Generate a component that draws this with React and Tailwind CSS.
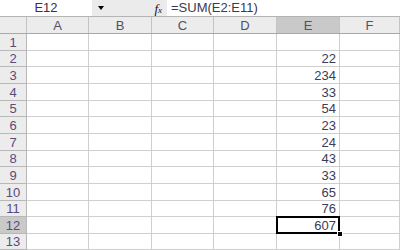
const COLS = [
  { name: "A", w: "w-[62px]" },
  { name: "B", w: "w-[63px]" },
  { name: "C", w: "w-[62px]" },
  { name: "D", w: "w-[63px]" },
  { name: "E", w: "w-[63px]" },
  { name: "F", w: "flex-1" },
]

// row heights alternate so the grid lands on the same pixels as the shot
const ROWS = [
  { n: 1, h: "h-[17px]", v: "" },
  { n: 2, h: "h-[16px]", v: "22" },
  { n: 3, h: "h-[17px]", v: "234" },
  { n: 4, h: "h-[17px]", v: "33" },
  { n: 5, h: "h-[16px]", v: "54" },
  { n: 6, h: "h-[17px]", v: "23" },
  { n: 7, h: "h-[17px]", v: "24" },
  { n: 8, h: "h-[16px]", v: "43" },
  { n: 9, h: "h-[17px]", v: "33" },
  { n: 10, h: "h-[17px]", v: "65" },
  { n: 11, h: "h-[16px]", v: "76" },
  { n: 12, h: "h-[17px]", v: "607" },
  { n: 13, h: "h-[16px]", v: "" },
]

export default function App() {
  return (
    <div className="w-[400px] h-[250px] flex flex-col overflow-hidden bg-white text-[13px] leading-none font-['Liberation_Sans',Arial,sans-serif]">
      {/* formula bar */}
      <div className="flex flex-none h-[17px] border-b border-[#b4b4b4]">
        <div className="w-[92px] flex items-center justify-center text-[#4a2850] pb-px">
          E12
        </div>
        <div className="w-[75px] bg-[#ebebeb] flex items-center">
          <span className="ml-[6px] w-0 h-0 border-l-[3px] border-r-[3px] border-t-[4px] border-l-transparent border-r-transparent border-t-black" />
          <span className="ml-auto mr-[5px] italic font-['Liberation_Serif',serif] text-[13px] text-[#111]">
            f<span className="text-[9px]">x</span>
          </span>
        </div>
        <div className="flex-1 flex items-center pl-[4px] text-[#3a3a50] pb-px">
          =SUM(E2:E11)
        </div>
      </div>

      {/* column headers */}
      <div className="flex flex-none h-[17px] bg-[#ececec] border-b border-[#a8a8a8] text-[#50506a]">
        <div className="w-[27px] border-r border-[#c4c4c4]" />
        {COLS.map((c) => (
          <div
            key={c.name}
            className={`${c.w} flex items-center justify-center border-r border-[#c4c4c4] ${
              c.name === "E" ? "bg-[#c9c9c9]" : ""
            }`}
          >
            {c.name}
          </div>
        ))}
      </div>

      {/* rows */}
      {ROWS.map((r) => (
        <div key={r.n} className={`flex flex-none ${r.h}`}>
          <div
            className={`w-[27px] flex items-center justify-center border-r border-b border-[#b8b8b8] text-[#5a4a7a] ${
              r.n === 12 ? "bg-[#c9c9c9]" : "bg-[#ececec]"
            }`}
          >
            {r.n}
          </div>
          {COLS.map((c) => (
            <div
              key={c.name}
              className={`${c.w} relative flex items-center justify-end pr-[3px] border-r border-b border-[#cfcfcf] text-[#3c3c58]`}
            >
              {c.name === "E" ? r.v : ""}
              {c.name === "E" && r.n === 12 && (
                <>
                  <div className="absolute -left-px -top-px -right-px -bottom-px border-2 border-black" />
                  <div className="absolute -right-[4px] -bottom-[4px] w-[6px] h-[6px] bg-black border border-white z-10" />
                </>
              )}
            </div>
          ))}
        </div>
      ))}
    </div>
  )
}
